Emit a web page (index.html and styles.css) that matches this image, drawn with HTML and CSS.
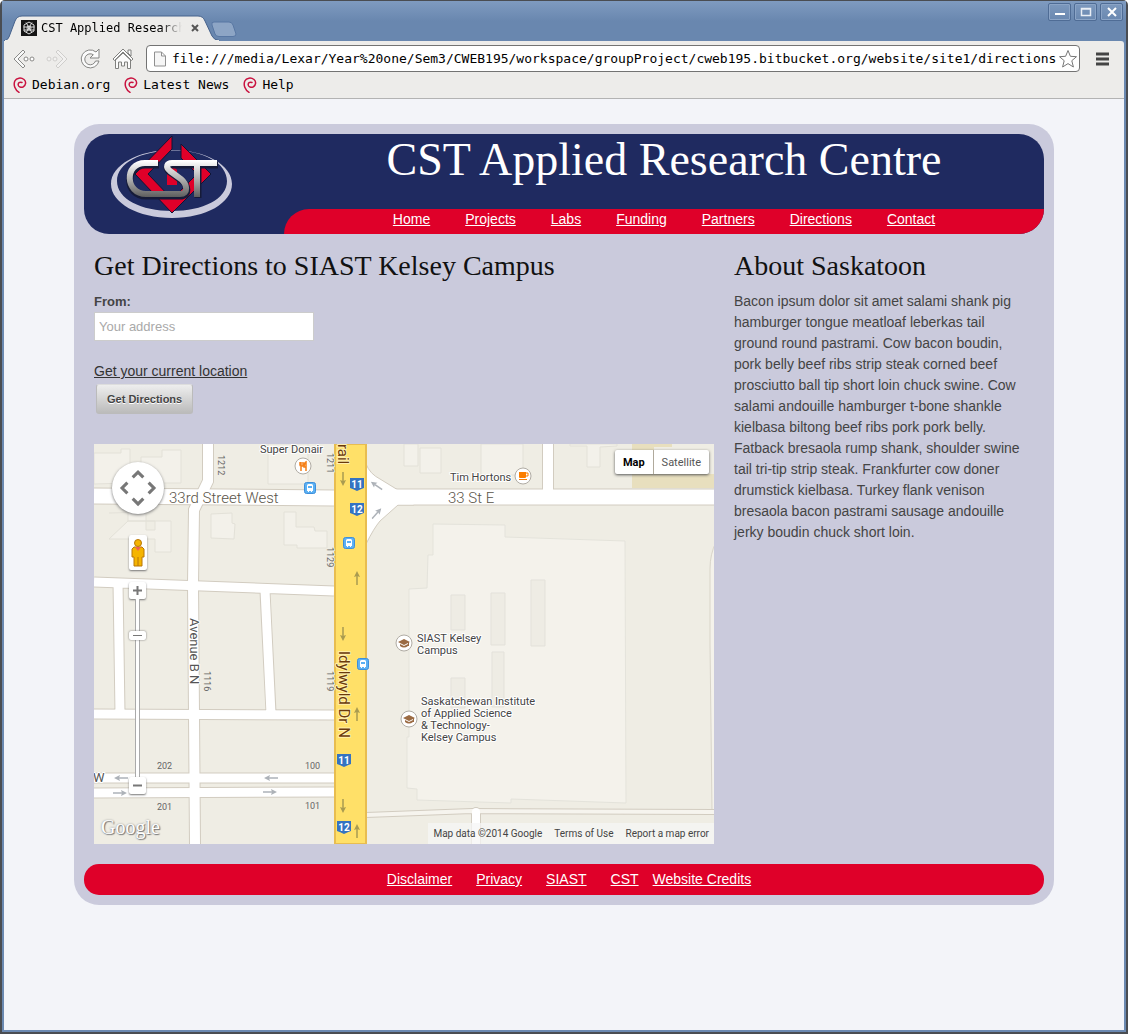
FILE: index.html
```
<!DOCTYPE html>
<html lang="en">
<head>
<meta charset="utf-8">
<title>CST Applied Research Centre</title>
<link rel="stylesheet" href="styles.css">
</head>
<body>
<svg width="0" height="0" class="defs" aria-hidden="true">
  <defs>
    <symbol id="swirl" viewBox="0 0 14 16"><path d="M9 5.500C6.500 4.500 5 6 5.200 8 5.500 10 8 10.800 10 10 13 8.500 13.500 4.500 11 2.500 8 .2 3.500.8 1.800 4 .2 8 2 13 6 15.300" fill="none" stroke="#c9123f" stroke-width="1.500" stroke-linecap="round"/></symbol>
    <symbol id="bus" viewBox="0 0 12 12"><rect x=".5" y=".5" width="11" height="11" rx="2" fill="#5bb0f3" stroke="#3d8fdb"/><path d="M3 3.500Q3 2 4.500 2h3Q9 2 9 3.500V9H8v1H7V9H5v1H4V9H3z" fill="#fff"/><path d="M4 4h4v2H4z" fill="#5bb0f3"/></symbol>
    <symbol id="shield" viewBox="0 0 14 13"><path d="M0 0h14v10Q11 11 7 13 3 11 0 10z" fill="#3573c1"/></symbol>
    <symbol id="arrow" viewBox="0 0 14 8"><path d="M0 4h9" fill="none" stroke="currentColor" stroke-width="1.500"/><path d="M8 1l6 3-6 3 1-3z" fill="currentColor"/></symbol>
    <symbol id="school" viewBox="0 0 18 18"><circle cx="9" cy="9" r="8" fill="#fff" stroke="#b0aca4"/><path d="M9 5l6 3-6 3-6-3zM5 10l4 2 4-2v2q-4 3-8 0z" fill="#9b6b43"/><path d="M13.500 8v4" stroke="#9b6b43"/></symbol>
  </defs>
</svg>
<div class="window">
  <header class="titlebar">
    <div class="tab">
      <svg class="tab-shape" width="216" height="26" viewBox="0 0 216 26"><path d="M0 26Q4 25 5 22L11 6Q13 1 18 1H194Q199 1 201 6L208 21Q210 25 215 25.500V26z" fill="#edecea" stroke="#46628c"/><path d="M1 26h214" stroke="#edecea" stroke-width="2"/></svg>
      <svg class="favicon" width="16" height="16" viewBox="0 0 16 16"><path d="M0 0h16v16H0z" fill="#151515"/><g fill="none" stroke="#ddd"><path d="M8 2l5 3v6l-5 3-5-3V5z"/><circle cx="8" cy="8" r="2"/><path d="M5 2.500L10.500 12M11 2.500L5.500 12M2.500 7h11M3 10h10"/></g></svg>
      <span class="tab-title">CST Applied Research</span>
      <button class="tab-close" aria-label="Close tab"><svg width="8" height="8" viewBox="0 0 8 8"><path d="M1 1l6 6M7 1L1 7" stroke="#555" stroke-width="2"/></svg></button>
    </div>
    <button class="new-tab" aria-label="New tab"><svg width="26" height="17" viewBox="0 0 26 17"><path d="M3 1H18Q21 1 22 4L25 13Q25 15.500 22 15.500H8Q5 15.500 4 13L1 4Q0 1 3 1z" fill="#8da5c5" stroke="#5877a3"/></svg></button>
    <div class="window-buttons">
      <button aria-label="Minimize"><svg width="12" height="12" viewBox="0 0 12 12"><path d="M1 8h10" stroke="#fff" stroke-width="2"/></svg></button>
      <button aria-label="Maximize"><svg width="12" height="12" viewBox="0 0 12 12"><path d="M1.500 2.500h9v7h-9zM1 3h10" fill="none" stroke="#e9eef5" stroke-width="1.500"/></svg></button>
      <button aria-label="Close"><svg width="12" height="12" viewBox="0 0 12 12"><path d="M2 2l8 8M10 2l-8 8" stroke="#fff" stroke-width="2"/></svg></button>
    </div>
  </header>
  <div class="chrome">
    <div class="toolbar">
      <button aria-label="Back"><svg width="24" height="24" viewBox="0 0 24 24"><path d="M11 3L2 12l9 9 2-2-7-7 7-7z" fill="#f8f8f8" stroke="#8a8a88"/><circle cx="14" cy="12" r="2" fill="#fff" stroke="#8a8a88"/><circle cx="20" cy="12" r="2" fill="#fff" stroke="#8a8a88"/></svg></button>
      <button aria-label="Forward" disabled><svg width="24" height="24" viewBox="0 0 24 24"><path d="M13 3l9 9-9 9-2-2 7-7-7-7z" fill="#f2f1f0" stroke="#cfcecc"/><circle cx="10" cy="12" r="2" fill="#f2f1f0" stroke="#cfcecc"/><circle cx="4" cy="12" r="2" fill="#f2f1f0" stroke="#cfcecc"/></svg></button>
      <button aria-label="Reload"><svg width="24" height="24" viewBox="0 0 24 24"><path d="M21 2v9h-9l3.300-3.300A5.500 5.500 0 1 0 17.500 14H21A9 9 0 1 1 18 5z" fill="#fbfbfb" stroke="#858583"/></svg></button>
      <button aria-label="Home"><svg width="24" height="24" viewBox="0 0 24 24"><path d="M17 3h3v6l-3-3z" fill="#fbfbfb" stroke="#80807e"/><path d="M4.500 13L12 6l7.500 7v8.500h-3V15h-3v4h-3v-4h-3v6.500h-3z" fill="#fbfbfb" stroke="#80807e"/><path d="M12 2l10 10-1.500 1.500L12 5l-8.500 8.500L2 12z" fill="#fbfbfb" stroke="#80807e"/></svg></button>
      <div class="address">
        <svg width="12" height="16" viewBox="0 0 12 16"><path d="M.5 1h7l4 4v10H.5zM7.500 1v4h4" fill="#f6f6f6" stroke="#909090"/></svg>
        <input type="text" aria-label="Address" readonly value="file:///media/Lexar/Year%20one/Sem3/CWEB195/workspace/groupProject/cweb195.bitbucket.org/website/site1/directions.html">
        <button aria-label="Bookmark this page"><svg width="20" height="20" viewBox="0 0 20 20"><path d="M10 1.500l2.400 5.800 6.100.4-4.700 4 1.600 6.300-5.400-3.400L4.600 18l1.600-6.300-4.700-4 6.100-.4z" fill="#fff" stroke="#777"/></svg></button>
      </div>
      <button class="menu" aria-label="Menu"><svg width="14" height="14" viewBox="0 0 14 14"><path d="M0 2h13M0 7h13M0 12h13" stroke="#444" stroke-width="3"/></svg></button>
    </div>
    <nav class="bookmarks" aria-label="Bookmarks">
      <a href="#"><svg width="14" height="16"><use href="#swirl"/></svg>Debian.org</a>
      <a href="#"><svg width="14" height="16"><use href="#swirl"/></svg>Latest News</a>
      <a href="#"><svg width="14" height="16"><use href="#swirl"/></svg>Help</a>
    </nav>
  </div>

  <div class="viewport">
    <div class="site">
      <header class="site-header">
        <svg class="logo" width="124" height="86" viewBox="0 0 124 86" role="img" aria-label="CST">
          <defs><linearGradient id="steel" x1="0" y1="26" x2="0" y2="64" gradientUnits="userSpaceOnUse"><stop offset="0" stop-color="#fff"/><stop offset=".45" stop-color="#b5b5b5"/><stop offset="1" stop-color="#555"/></linearGradient></defs>
          <path fill-rule="evenodd" d="M61 15C95 15 121 30 121 49S95 83 61 83 0 68 0 49 27 15 61 15zM61 15.500C30 16 6 28 6 46S30 76 61 76s55-12 55-30S92 15 61 15.500z" fill="#cacadc"/>
          <path d="M61 1v13L37 39l24 25 25-25-16-16V9l30 30-39 39L24 39z" fill="#df0029" stroke="#0e1536"/>
          <path d="M56 30h5l5 5v15H56z" fill="#df0029"/>
          <g fill="none"><path d="M48 30H34C13 31 14 61 35 61H69C79 61 77 50 70 45L59 37C54 33 56 30 61 30H107M87 31V63" stroke="#161b38" stroke-width="7"/><path d="M47 28H34C13 28 14 59 35 59H69C78 59 76 49 70 44L59 36C54 32 56 28 61 28H106M86 29V62" stroke="url(#steel)" stroke-width="6"/></g>
        </svg>
        <div class="banner">
          <h1>CST Applied Research Centre</h1>
          <nav class="site-nav" aria-label="Main">
            <a href="#">Home</a><a href="#">Projects</a><a href="#">Labs</a><a href="#">Funding</a><a href="#">Partners</a><a href="#">Directions</a><a href="#">Contact</a>
          </nav>
        </div>
      </header>

      <div class="columns">
        <main>
          <h2>Get Directions to SIAST Kelsey Campus</h2>
          <form>
            <label for="from">From:</label>
            <input type="text" id="from" placeholder="Your address">
            <a href="#">Get your current location</a>
            <button type="button">Get Directions</button>
          </form>
          <div class="map">
            <svg class="map-tiles" viewBox="0 0 620 400" role="img" aria-label="Map of the campus area">
              <rect width="620" height="400" fill="#efede4"/>
              <path d="M0 9H27V5H36V39L0 40zM47 13H68V6H87V39H47zM174 0H214V40H174zM15 69L52 68V86H61V77H34V68M34 77H77V108H61V95H34V95H15zM117 70L138 69V79L141 80 140 95 117 94zM190 68H202V83H220L221 87H233V104H203V101H190zM310 0h14v22h-14zM326 4h21v25h-21zM387 0h42v31h-42zM476 0V2H493V23H506V3L523 2V0z" fill="#f3f1ea" stroke="#e3e1d8"/>
              <path d="M538 0H578V3H560V30H620V44H538z" fill="#e8dfbe"/>
              <path d="M339 80L411 81V93L531 97 532 359 417 355V359L323 356V345L313 344V293H315V145L333 144 334 111H339z" fill="#f4f2eb" stroke="#e4e3db"/>
              <path d="M357 151h14v35h-14zM397 149h14v52h-14zM437 136h14v66h-14zM398 208h12v55h-12zM357 234h14v30h-14z" fill="#eeece4" stroke="#e3e1da"/>
              <path d="M622 98Q616 110 616 125V200L618 366H622z" fill="#f4f2eb" stroke="#d8d4c9"/>
              <g fill="none" stroke="#d2ccc0">
                <path d="M0 52L240 54M272 53H620" stroke-width="17"/>
                <path d="M114 0V37L100 66 99 140 101 400" stroke-width="12"/>
                <path d="M0 138L240 147M24 140L26 268M171 148L177 268M0 270L240 271M0 334H240M0 349L240 348" stroke-width="11"/>
                <path d="M454 0V50" stroke-width="12"/>
                <path d="M272 371L378 367 620 368" stroke-width="6"/>
                <path d="M382 368V400" stroke-width="10" stroke-linecap="round"/>
              </g>
              <path d="M272 20Q276 30 286 35L304 46H320V61H304L286 77Q280 84 272 100z" fill="#fff" stroke="#d2ccc0"/>
              <g fill="none" stroke="#fff">
                <path d="M0 52L240 54M272 53H620" stroke-width="15"/>
                <path d="M114 0V37L100 66 99 140 101 400" stroke-width="10"/>
                <path d="M0 138L240 147M24 138L26 270M171 146L177 270M0 270L240 271M0 334H240M0 349L240 348" stroke-width="9"/>
                <path d="M454 0V50" stroke-width="10"/>
                <path d="M272 371L378 367 620 368" stroke="#f6f4ee" stroke-width="4"/>
                <path d="M382 368V400" stroke-width="8" stroke-linecap="round"/>
              </g>
              <path d="M241 0H272V400H241z" fill="#ffe068" stroke="#e8bd50" stroke-width="2"/>
              <g color="#a99b50">
                <use href="#arrow" width="14" height="8" transform="translate(253 28) rotate(90)"/>
                <use href="#arrow" width="14" height="8" transform="translate(259 141) rotate(-90)"/>
                <use href="#arrow" width="14" height="8" transform="translate(253 183) rotate(90)"/>
                <use href="#arrow" width="14" height="8" transform="translate(259 277) rotate(-90)"/>
                <use href="#arrow" width="14" height="8" transform="translate(253 355) rotate(90)"/>
                <use href="#arrow" width="14" height="8" transform="translate(259 394) rotate(-90)"/>
              </g>
              <g color="#adb2b8">
                <use href="#arrow" width="14" height="8" transform="translate(34 338) rotate(180)"/>
                <use href="#arrow" width="14" height="8" transform="translate(19 345)"/>
                <use href="#arrow" width="14" height="8" transform="translate(184 338) rotate(180)"/>
                <use href="#arrow" width="14" height="8" transform="translate(169 344)"/>
                <use href="#arrow" width="14" height="8" transform="translate(286 49) rotate(215)"/>
                <use href="#arrow" width="14" height="8" transform="translate(275 72) rotate(-48)"/>
              </g>
              <use href="#shield" x="256" y="34" width="14" height="13"/><use href="#shield" x="256" y="59" width="14" height="13"/>
              <use href="#shield" x="243" y="310" width="14" height="13"/><use href="#shield" x="243" y="377" width="14" height="13"/>
              <g class="shield-text"><text x="263" y="44">11</text><text x="263" y="69">12</text><text x="250" y="320">11</text><text x="250" y="387">12</text></g>
              <use href="#bus" x="210" y="38" width="12" height="12"/><use href="#bus" x="249" y="93" width="12" height="12"/><use href="#bus" x="263" y="214" width="12" height="12"/>
              <use href="#school" x="301" y="190" width="18" height="18"/><use href="#school" x="306" y="266" width="18" height="18"/>
              <circle cx="209" cy="22" r="8" fill="#fff" stroke="#b0aca4"/>
              <path d="M206 18v3q0 1 1 1h1q1 0 1-1v-3M207 18v9M212 27v-9q-2 1-2 5h2" fill="none" stroke="#f57f17" stroke-width="1.500"/>
              <circle cx="429" cy="32" r="8" fill="#fff" stroke="#b0aca4"/>
              <path d="M425 28h7v5q0 1-1 1h-5q-1 0-1-1zM425 35h8v1h-8z" fill="#fb7e00"/><path d="M432 29h2v3h-2" fill="none" stroke="#fb7e00"/>
              <g class="street"><text x="75" y="59">33rd Street West</text><text x="354" y="59">33 St E</text></g>
              <g class="place">
                <text x="166" y="9">Super Donair</text><text x="356" y="37">Tim Hortons</text>
                <text x="323" y="198">SIAST Kelsey</text><text x="323" y="210">Campus</text>
                <text x="327" y="261">Saskatchewan Institute</text><text x="327" y="273">of Applied Science</text><text x="327" y="285">&amp; Technology-</text><text x="327" y="297">Kelsey Campus</text>
              </g>
              <g class="number">
                <text x="63" y="325">202</text><text x="211" y="325">100</text><text x="63" y="366">201</text><text x="211" y="365">101</text>
                <text transform="translate(124 11) rotate(90)">1212</text><text transform="translate(233 9) rotate(90)">1211</text>
                <text transform="translate(233 103) rotate(90)">1129</text><text transform="translate(110 227) rotate(90)">1116</text><text transform="translate(233 227) rotate(90)">1119</text>
              </g>
              <g class="avenue"><text transform="translate(96 174) rotate(90)">Avenue B N</text><text x="-1" y="338">W</text></g>
              <g class="highway"><text transform="translate(245 207) rotate(90)">Idylwyld Dr N</text><text transform="translate(244 0) rotate(90)">rail</text></g>
              <text class="google" x="7" y="390">Google</text>
            </svg>
            <div class="pan">
              <svg width="52" height="52" viewBox="0 0 52 52"><path d="M20 14l6-6 6 6M20 38l6 6 6-6M14 20l-6 6 6 6M38 20l6 6-6 6" transform="translate(3 3) scale(.885)" fill="none" stroke="#777" stroke-width="3.500"/></svg>
            </div>
            <button class="pegman" type="button" aria-label="Street View"><svg width="14" height="30" viewBox="0 0 14 30"><g fill="#f5b400" stroke="#b87608"><path d="M3 9h8l2 2v8h-2v9H3v-9H1v-8z"/><circle cx="7" cy="5" r="3.500"/></g><path d="M4 9h6l-3 4z" fill="#ee6352"/><path d="M7 19v9" stroke="#b87608"/></svg></button>
            <div class="zoom">
              <button type="button" aria-label="Zoom in"><svg width="9" height="9" viewBox="0 0 9 9"><path d="M0 4.500h9M4.500 0v9" stroke="#777" stroke-width="2"/></svg></button>
              <input type="range" aria-label="Zoom" min="0" max="100" value="19">
              <button type="button" aria-label="Zoom out"><svg width="9" height="9" viewBox="0 0 9 9"><path d="M0 4.500h9" stroke="#777" stroke-width="2"/></svg></button>
            </div>
            <div class="map-type"><button type="button" class="active">Map</button><button type="button">Satellite</button></div>
            <div class="attribution"><span>Map data ©2014 Google</span><a href="#">Terms of Use</a><a href="#">Report a map error</a></div>
          </div>
        </main>
        <aside>
          <h2>About Saskatoon</h2>
          <p>Bacon ipsum dolor sit amet salami shank pig hamburger tongue meatloaf leberkas tail ground round pastrami. Cow bacon boudin, pork belly beef ribs strip steak corned beef prosciutto ball tip short loin chuck swine. Cow salami andouille hamburger t-bone shankle kielbasa biltong beef ribs pork pork belly. Fatback bresaola rump shank, shoulder swine tail tri-tip strip steak. Frankfurter cow doner drumstick kielbasa. Turkey flank venison bresaola bacon pastrami sausage andouille jerky boudin chuck short loin.</p>
        </aside>
      </div>

      <footer class="site-footer">
        <a href="#">Disclaimer</a><a href="#">Privacy</a><a href="#">SIAST</a><a href="#">CST</a><a href="#" class="credits">Website Credits</a>
      </footer>
    </div>
  </div>
</div>
</body>
</html>
```
FILE: styles.css
```
* { box-sizing: border-box; }
body { margin: 0; font-family: "Liberation Sans", Arial, sans-serif; }
button { padding: 0; border: 0; background: none; color: inherit; font: inherit; }
svg { display: block; }
.defs { position: absolute; }

/* Browser window */
.window {
  display: flex;
  flex-direction: column;
  min-height: 100vh;
  padding: 0 2px 2px;
  border: 2px solid #4a4d52;
  border-top-width: 1px;
  border-radius: 5px 5px 0 0;
  background: #6b89b1;
}
.titlebar {
  display: flex;
  align-items: flex-end;
  height: 40px;
  margin: 0 -2px;
  padding-left: 2px;
  background: linear-gradient(#7f9bc0, #6987af 20px);
}
.tab {
  position: relative;
  display: flex;
  align-items: center;
  width: 208px;
  height: 26px;
  padding: 0 13px 0 17px;
}
.tab-shape { position: absolute; left: 0; top: 0; }
.favicon { position: relative; flex: none; }
.tab-title {
  position: relative;
  flex: 1;
  overflow: hidden;
  margin: 0 9px 0 4px;
  font: 12px "DejaVu Sans Mono", monospace;
  line-height: 20px;
  white-space: nowrap;
  -webkit-mask-image: linear-gradient(90deg, #000 85%, transparent);
  mask-image: linear-gradient(90deg, #000 85%, transparent);
}
.tab-close { position: relative; }
.new-tab { margin: 0 0 3px -1px; }
.window-buttons { display: flex; gap: 3px; margin: 2px 3px auto auto; }
.window-buttons button {
  display: grid;
  place-items: center;
  width: 23px;
  height: 18px;
  border: 1px solid #4f6c95;
  border-radius: 2px;
  box-shadow: inset 0 0 0 1px #8ba4c6;
}
.chrome { background: #edecea; border-bottom: 1px solid #b3b3b3; border-radius: 0 3px 0 0; }
.toolbar {
  display: flex;
  align-items: center;
  gap: 9px;
  padding: 4px 14px 0 8px;
}
.address {
  display: flex;
  flex: 1;
  align-items: center;
  height: 27px;
  margin-left: 2px;
  padding: 0 1px 0 7px;
  border: 1px solid #737373;
  border-radius: 4px;
  background: #fff;
}
.address input {
  flex: 1;
  min-width: 0;
  height: 24px;
  margin: 0 2px 0 6px;
  padding: 0;
  border: 0;
  outline: 0;
  font: 13px "DejaVu Sans Mono", monospace;
}
.menu { margin-left: 7px; }
.bookmarks {
  display: flex;
  gap: 14px;
  height: 26px;
  padding-left: 9px;
  align-items: center;
}
.bookmarks a {
  display: flex;
  align-items: center;
  gap: 5px;
  color: #000;
  font: 13px "DejaVu Sans Mono", monospace;
  line-height: 24px;
  text-decoration: none;
}
.viewport { flex: 1; padding: 25px 20px; background: #f3f4f9; }

/* Site */
.site {
  max-width: 980px;
  margin: 0 auto;
  padding: 10px;
  border-radius: 25px;
  background: #cacadc;
}
.site-header {
  display: grid;
  grid-template-columns: 200px 1fr;
  overflow: hidden;
  border-radius: 25px;
  background: #1f2a60;
  color: #fff;
}
.logo { margin: 1px 0 0 27px; }
.banner h1 {
  height: 75px;
  margin: 0;
  font: 46px "Liberation Serif", "Times New Roman", serif;
  line-height: 52px;
  text-align: center;
}
.site-nav {
  display: flex;
  justify-content: center;
  gap: 35px;
  height: 25px;
  border-radius: 25px 0 0 0;
  background: #df0029;
  font-size: 14px;
  line-height: 21px;
}
.site-nav a, .site-footer a { color: #fff; }
.columns {
  display: grid;
  grid-template-columns: 62fr 30fr;
  gap: 20px;
  padding: 16px 10px 20px;
}
h2 {
  margin: 0 0 9px;
  color: #111;
  font: 28px "Liberation Serif", "Times New Roman", serif;
  line-height: 32px;
}
aside p { margin: 0; padding-right: 8px; color: #444; font-size: 14px; line-height: 21px; }
form { display: flex; flex-direction: column; align-items: flex-start; }
form label { color: #444; font-size: 13px; font-weight: bold; line-height: 21px; }
form input {
  width: 220px;
  height: 29px;
  padding: 0 4px;
  border: 1px solid #ccc;
  font: 13px "Liberation Sans", Arial, sans-serif;
}
form input::placeholder { color: #a9a9a9; }
form a { margin-top: 20px; color: #333; font-size: 14px; line-height: 21px; }
form button {
  height: 30px;
  margin: 2px 0 30px 2px;
  padding: 0 10px;
  border: 1px solid #bbb;
  border-top-color: #ddd;
  border-radius: 3px;
  background: linear-gradient(#eee, #bbb);
  color: #444;
  font-size: 11px;
  font-weight: bold;
  text-shadow: 0 1px 0 #fff;
}

/* Map */
.map { position: relative; font-family: Roboto, sans-serif; }
.map-tiles { width: 100%; height: auto; }
.map text { paint-order: stroke; stroke: #fff; stroke-width: 2px; stroke-linejoin: round; }
.map .shield-text text { fill: #fff; stroke: none; font-size: 10px; font-weight: bold; text-anchor: middle; }
.street { fill: #5a5449; font-size: 15px; font-weight: 300; }
.place { fill: #444; font-size: 11px; }
.number { fill: #666; font-size: 9px; }
.number text { stroke: #efede4; }
.avenue { fill: #555; font-size: 13px; }
.highway { fill: #6b3a0a; font-size: 15px; }
.highway text { stroke: #fff0b0; }
.map .google { fill: #fff; stroke: none; font: 20px "Liberation Serif", serif; text-shadow: 1px 1px 1px #777, 0 0 2px #888; }
.pan {
  position: absolute;
  left: 18px;
  top: 18px;
  border-radius: 50%;
  background: #fff;
  box-shadow: 0 1px 3px #777;
}
.pegman {
  position: absolute;
  left: 35px;
  top: 91px;
  width: 18px;
  height: 35px;
  padding: 2px;
  border-radius: 2px;
  background: #fff;
  box-shadow: 0 1px 2px #777;
}
.zoom {
  position: absolute;
  left: 35px;
  top: 138px;
  display: flex;
  flex-direction: column;
  align-items: center;
}
.zoom button {
  display: grid;
  place-items: center;
  width: 17px;
  height: 17px;
  border-radius: 2px;
  background: #fff;
  box-shadow: 0 1px 2px #777;
}
.zoom input {
  appearance: none;
  writing-mode: vertical-lr;
  width: 17px;
  height: 178px;
  margin: 0;
  background: linear-gradient(90deg, transparent 6px, #aaa 6px 7px, #fff 7px 10px, #aaa 10px 11px, transparent 11px);
}
.zoom input::-webkit-slider-thumb {
  appearance: none;
  width: 17px;
  height: 9px;
  border-radius: 2px;
  background: linear-gradient(#777, #777) center / 9px 1px no-repeat, #fff;
  box-shadow: 0 0 2px #666;
}
.map-type {
  position: absolute;
  right: 5px;
  top: 6px;
  display: flex;
  border-radius: 2px;
  background: #fff;
  box-shadow: 0 1px 3px #555;
  color: #555;
  font-size: 11px;
}
.map-type button { height: 24px; padding: 0 8px; }
.map-type .active { border-right: 1px solid #b0aa9c; color: #000; font-weight: bold; }
.attribution {
  position: absolute;
  right: 0;
  bottom: 0;
  display: flex;
  gap: 2px;
  background: rgba(245, 245, 245, .75);
  font-size: 10px;
  line-height: 21px;
}
.attribution > * { padding: 0 5px; color: #444; text-decoration: none; white-space: nowrap; }

.site-footer {
  display: flex;
  justify-content: center;
  gap: 24px;
  padding: 5px 0 5px 10px;
  border-radius: 15px;
  background: #df0029;
  font-size: 14px;
  line-height: 21px;
}
.site-footer .credits { margin-left: -10px; }
```
